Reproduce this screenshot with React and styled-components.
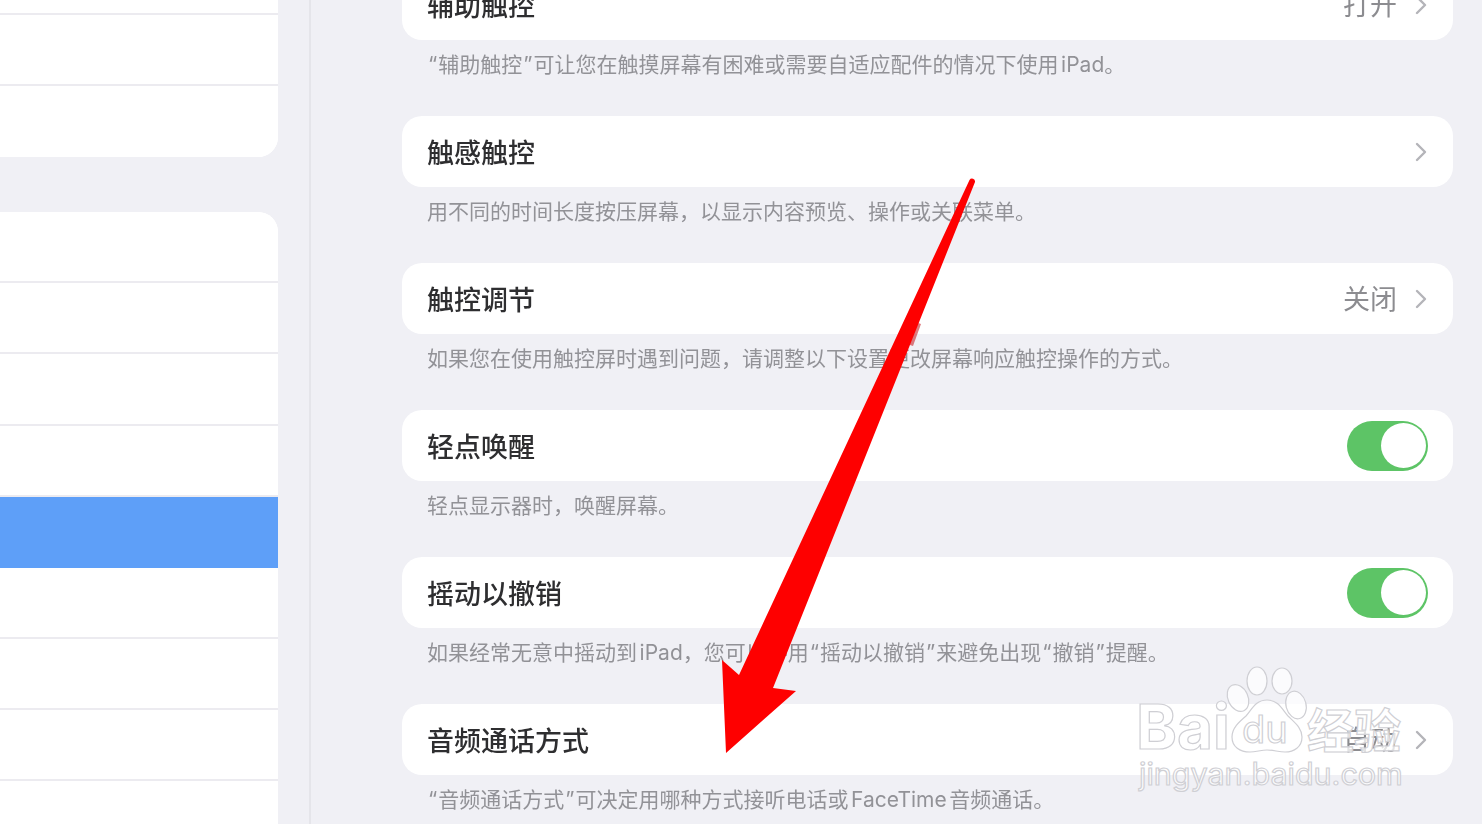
import React from 'react'
import styled, { createGlobalStyle } from 'styled-components'

const GlobalStyle = createGlobalStyle`
html, body {
  margin: 0;
  padding: 0;
  background: #f0f0f5;
}
#root {
  height: 824px;
}
`

const Page = styled.div`
position: relative;
display: flex;
width: 1482px;
height: 824px;
overflow: hidden;
background: #f0f0f5;
font-family: "Inter", "Noto Sans CJK SC", sans-serif;
text-autospace: normal;
`

const Sidebar = styled.aside`
flex: none;
display: flex;
flex-direction: column;
gap: 55px;
width: 278px;
margin-top: -56.6px;
`

const SideGroup = styled.div`
flex: none;
display: flex;
flex-direction: column;
background: #fff;
border-radius: 0 20px 20px 0;
overflow: hidden;
`

const SideRow = styled.div`
flex: none;
height: 69.2px;
background: ${p => (p.$active ? '#5e9ff8' : '#fff')};
border-bottom: 2px solid ${p => (p.$active ? '#5e9ff8' : '#ecebf0')};
&:last-child {
  border-bottom: none;
  height: 71.2px;
}
`

const Divider = styled.div`
flex: none;
width: 2px;
margin-left: 31px;
background: #e5e5ea;
`

const Content = styled.main`
flex: none;
width: 1051px;
margin-left: 91px;
margin-top: -31px;
`

const Card = styled.div`
display: flex;
align-items: center;
height: 71px;
padding: 0 25px;
box-sizing: border-box;
background: #fff;
border-radius: 20px;
`

const Title = styled.span`
flex: 1;
padding-top: 4px;
font-size: 27px;
font-weight: 500;
line-height: 32px;
color: #2e2e30;
filter: blur(0.5px);
`

const Value = styled.span`
padding-top: 2px;
margin-right: 18px;
font-size: 27px;
line-height: 32px;
color: #8c8c90;
filter: blur(0.5px);
`

const Chevron = styled.svg`
flex: none;
width: 12px;
height: 20px;
margin-right: 1px;
`

const Toggle = styled.div`
flex: none;
display: flex;
justify-content: flex-end;
align-items: center;
width: 81px;
height: 50px;
padding: 0 2px;
box-sizing: border-box;
background: #5dc466;
border-radius: 25px;
`

const Knob = styled.div`
width: 45px;
height: 45px;
background: #fff;
border-radius: 50%;
`

const Desc = styled.p`
height: 76px;
margin: 0;
padding: 10px 25px 0;
box-sizing: border-box;
font-size: 21px;
line-height: 30px;
color: #929297;
white-space: nowrap;
filter: blur(0.5px);
`

const Quote = styled.span`
padding: 0 1px;
`

const Overlay = styled.svg`
position: absolute;
left: 0;
top: 0;
width: 1482px;
height: 824px;
pointer-events: none;
`

const settings = [
  { title: '辅助触控', value: '打开', desc: '“辅助触控”可让您在触摸屏幕有困难或需要自适应配件的情况下使用iPad。' },
  { title: '触感触控', desc: '用不同的时间长度按压屏幕，以显示内容预览、操作或关联菜单。' },
  { title: '触控调节', value: '关闭', desc: '如果您在使用触控屏时遇到问题，请调整以下设置更改屏幕响应触控操作的方式。' },
  { title: '轻点唤醒', toggle: true, desc: '轻点显示器时，唤醒屏幕。' },
  { title: '摇动以撤销', toggle: true, desc: '如果经常无意中摇动到iPad，您可以停用“摇动以撤销”来避免出现“撤销”提醒。' },
  { title: '音频通话方式', value: '自动', desc: '“音频通话方式”可决定用哪种方式接听电话或FaceTime音频通话。' },
]

const wmStyle = {
  fill: 'rgba(255,255,255,0.75)',
  stroke: '#cfcfd4',
  strokeWidth: 1.2,
}

// the quotes are a bit wider in the reference font
const withQuotes = text =>
  text.split(/([“”])/).map((part, i) =>
    part === '“' || part === '”' ? <Quote key={i}>{part}</Quote> : part
  )

const App = () => {
  return (
    <Page>
      <GlobalStyle />
      <Sidebar>
        <SideGroup>
          <SideRow />
          <SideRow />
          <SideRow />
        </SideGroup>
        <SideGroup>
          <SideRow />
          <SideRow />
          <SideRow />
          <SideRow />
          <SideRow $active />
          <SideRow />
          <SideRow />
          <SideRow />
          <SideRow />
        </SideGroup>
      </Sidebar>
      <Divider />
      <Content>
        {settings.map(item => (
          <div key={item.title}>
            <Card>
              <Title>{item.title}</Title>
              {item.value && <Value>{item.value}</Value>}
              {item.toggle ? (
                <Toggle><Knob /></Toggle>
              ) : (
                <Chevron viewBox="0 0 12 20">
                  <path d="M2 2l8 8-8 8" fill="none" stroke="#b4b4b9" strokeWidth="2.4" strokeLinecap="round" strokeLinejoin="round" />
                </Chevron>
              )}
            </Card>
            <Desc>{withQuotes(item.desc)}</Desc>
          </div>
        ))}
      </Content>

      <Overlay viewBox="0 0 1482 824">
        {/* baidu watermark */}
        <g style={wmStyle}>
          <ellipse cx="1238" cy="698" rx="10" ry="14" transform="rotate(-25 1238 698)" />
          <ellipse cx="1257" cy="681" rx="10" ry="14" />
          <ellipse cx="1282" cy="681" rx="10" ry="13" />
          <ellipse cx="1296" cy="705" rx="10" ry="14" transform="rotate(-15 1296 705)" />
          <path d="M1267 700c11 0 15 9 21 16 7 7 14 12 14 21 0 10-8 15-17 15-6 0-12-2-18-2s-11 2-17 2c-10 0-18-5-18-15 0-9 7-15 14-21 6-7 10-16 21-16z" />
          <text x="1136" y="749" fontFamily="Inter, sans-serif" fontSize="62" fontWeight="700">Bai</text>
          <text x="1242" y="743" fontFamily="Inter, sans-serif" fontSize="38" fontWeight="400">du</text>
          <text x="1307" y="748" fontFamily="'Noto Sans CJK SC', sans-serif" fontSize="47" fontWeight="700">经验</text>
          <text x="1139" y="785" fontFamily="Inter, sans-serif" fontSize="30.5" fontWeight="400">jingyan.baidu.com</text>
        </g>
        {/* red arrow */}
        <path d="M915 322l6 2-8 22-6-2z" fill="#c9242a" opacity="0.6" />
        <path d="M739 675L969.5 180a3 3 0 0 1 5.5 2L773 688L796 691L726 753L722 660z" fill="#fe0000" />
      </Overlay>
    </Page>
  )
}

export default App
